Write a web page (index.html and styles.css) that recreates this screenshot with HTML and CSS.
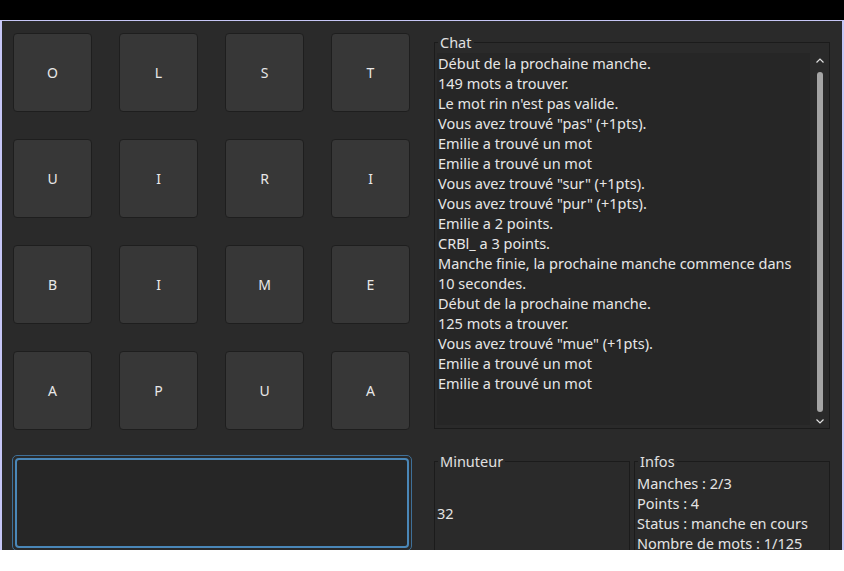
FILE: index.html
```html
<!DOCTYPE html>
<html lang="fr">
<head>
<meta charset="utf-8">
<title>Boggle</title>
<link rel="stylesheet" href="styles.css">
</head>
<body>
<div class="topbar"></div>
<div class="window">
  <div class="left">
    <div class="board">
      <div class="cell">O</div><div class="cell">L</div><div class="cell">S</div><div class="cell">T</div>
      <div class="cell">U</div><div class="cell">I</div><div class="cell">R</div><div class="cell">I</div>
      <div class="cell">B</div><div class="cell">I</div><div class="cell">M</div><div class="cell">E</div>
      <div class="cell">A</div><div class="cell">P</div><div class="cell">U</div><div class="cell">A</div>
    </div>
    <div class="input-ring"><div class="input"></div></div>
  </div>
  <div class="right">
    <fieldset class="group chat">
      <legend>Chat</legend>
      <div class="chat-body">
        <div class="chat-text">
          <div>Début de la prochaine manche.</div>
          <div>149 mots a trouver.</div>
          <div>Le mot rin n'est pas valide.</div>
          <div>Vous avez trouvé "pas" (+1pts).</div>
          <div>Emilie a trouvé un mot</div>
          <div>Emilie a trouvé un mot</div>
          <div>Vous avez trouvé "sur" (+1pts).</div>
          <div>Vous avez trouvé "pur" (+1pts).</div>
          <div>Emilie a 2 points.</div>
          <div>CRBl_ a 3 points.</div>
          <div>Manche finie, la prochaine manche commence dans 10 secondes.</div>
          <div>Début de la prochaine manche.</div>
          <div>125 mots a trouver.</div>
          <div>Vous avez trouvé "mue" (+1pts).</div>
          <div>Emilie a trouvé un mot</div>
          <div>Emilie a trouvé un mot</div>
        </div>
        <div class="scrollbar">
          <svg class="arrow" width="8" height="5" viewBox="0 0 8 5"><polyline points="0.5,4.5 4,1 7.5,4.5" fill="none" stroke="#e0e0e0" stroke-width="1.2"/></svg>
          <div class="track"><div class="handle"></div></div>
          <svg class="arrow" width="8" height="5" viewBox="0 0 8 5"><polyline points="0.5,0.5 4,4 7.5,0.5" fill="none" stroke="#e0e0e0" stroke-width="1.2"/></svg>
        </div>
      </div>
    </fieldset>
    <div class="bottom">
      <fieldset class="group timer">
        <legend>Minuteur</legend>
        <div class="timer-body">32</div>
      </fieldset>
      <fieldset class="group infos">
        <legend>Infos</legend>
        <div class="infos-body">
          <div>Manches : 2/3</div>
          <div>Points : 4</div>
          <div>Status : manche en cours</div>
          <div>Nombre de mots : 1/125</div>
        </div>
      </fieldset>
    </div>
  </div>
</div>
</body>
</html>
```

FILE: styles.css
```css
html, body {
  margin: 0;
  padding: 0;
  background: #ffffff;
  font-family: "Noto Sans", "Open Sans", sans-serif;
  font-size: 14.5px;
  color: #e4e4e4;
}

.topbar {
  height: 20px;
  background: #000000;
}

.window {
  box-sizing: border-box;
  width: 844px;
  height: 530px;
  background: #2a2a2a;
  border: 2px solid #c6c6f6;
  border-bottom: none;
  border-top-width: 1px;
  display: flex;
  overflow: hidden;
}

.left {
  width: 420px;
  flex: none;
  padding: 12px 0 0 11px;
  box-sizing: border-box;
}

.board {
  display: grid;
  grid-template-columns: repeat(4, 79px);
  grid-auto-rows: 79px;
  gap: 27px;
}

.cell {
  box-sizing: border-box;
  background: #373737;
  border: 1px solid #1e1e1e;
  border-radius: 4px;
  display: flex;
  align-items: center;
  justify-content: center;
  font-size: 14px;
  color: #e8e8e8;
  padding-bottom: 1px;
}

.input-ring {
  margin: 25px 0 0 -1px;
  width: 400px;
  height: 96px;
  box-sizing: border-box;
  border: 1px solid #3f7099;
  border-radius: 5px;
  padding: 2px;
}

.input {
  height: 100%;
  box-sizing: border-box;
  border: 2px solid #4a87b8;
  border-radius: 4px;
  background: #262626;
}

.right {
  flex: none;
  width: 396px;
  margin-left: 12px;
  padding-top: 12px;
}

.group {
  margin: 0;
  min-width: 0;
  border: 1px solid #1b1b1b;
  padding: 0;
  box-sizing: border-box;
}

.group legend {
  padding: 0 2px;
  margin-left: 3px;
  line-height: 18px;
  color: #e0e0e0;
}

.chat {
  width: 396px;
}

.chat-body {
  display: flex;
  padding: 2px 1px 3px 2px;
  height: 372px;
}

.chat-text {
  flex: 1;
  background: #262626;
  line-height: 20px;
  padding: 0 10px 0 1px;
  color: #e6e6e6;
}

.scrollbar {
  width: 18px;
  flex: none;
  display: flex;
  flex-direction: column;
  align-items: center;
  padding: 5px 0 1px 0;
  box-sizing: border-box;
}

.arrow {
  flex: none;
  margin-left: 1px;
}

.track {
  flex: 1;
  width: 6px;
  padding: 9px 0 7px 0;
  margin-left: 1px;
  display: flex;
}

.handle {
  flex: 1;
  background: #a6a6a6;
  border-radius: 3px;
}

.bottom {
  display: flex;
  gap: 4px;
  margin-top: 23px;
}

.timer, .infos {
  width: 196px;
  flex: none;
}

.timer-body {
  height: 80px;
  padding: 3px 0 0 2px;
  display: flex;
  align-items: center;
  line-height: 20px;
}

.infos-body {
  padding: 3px 0 0 2px;
  line-height: 20px;
  height: 80px;
}
```
